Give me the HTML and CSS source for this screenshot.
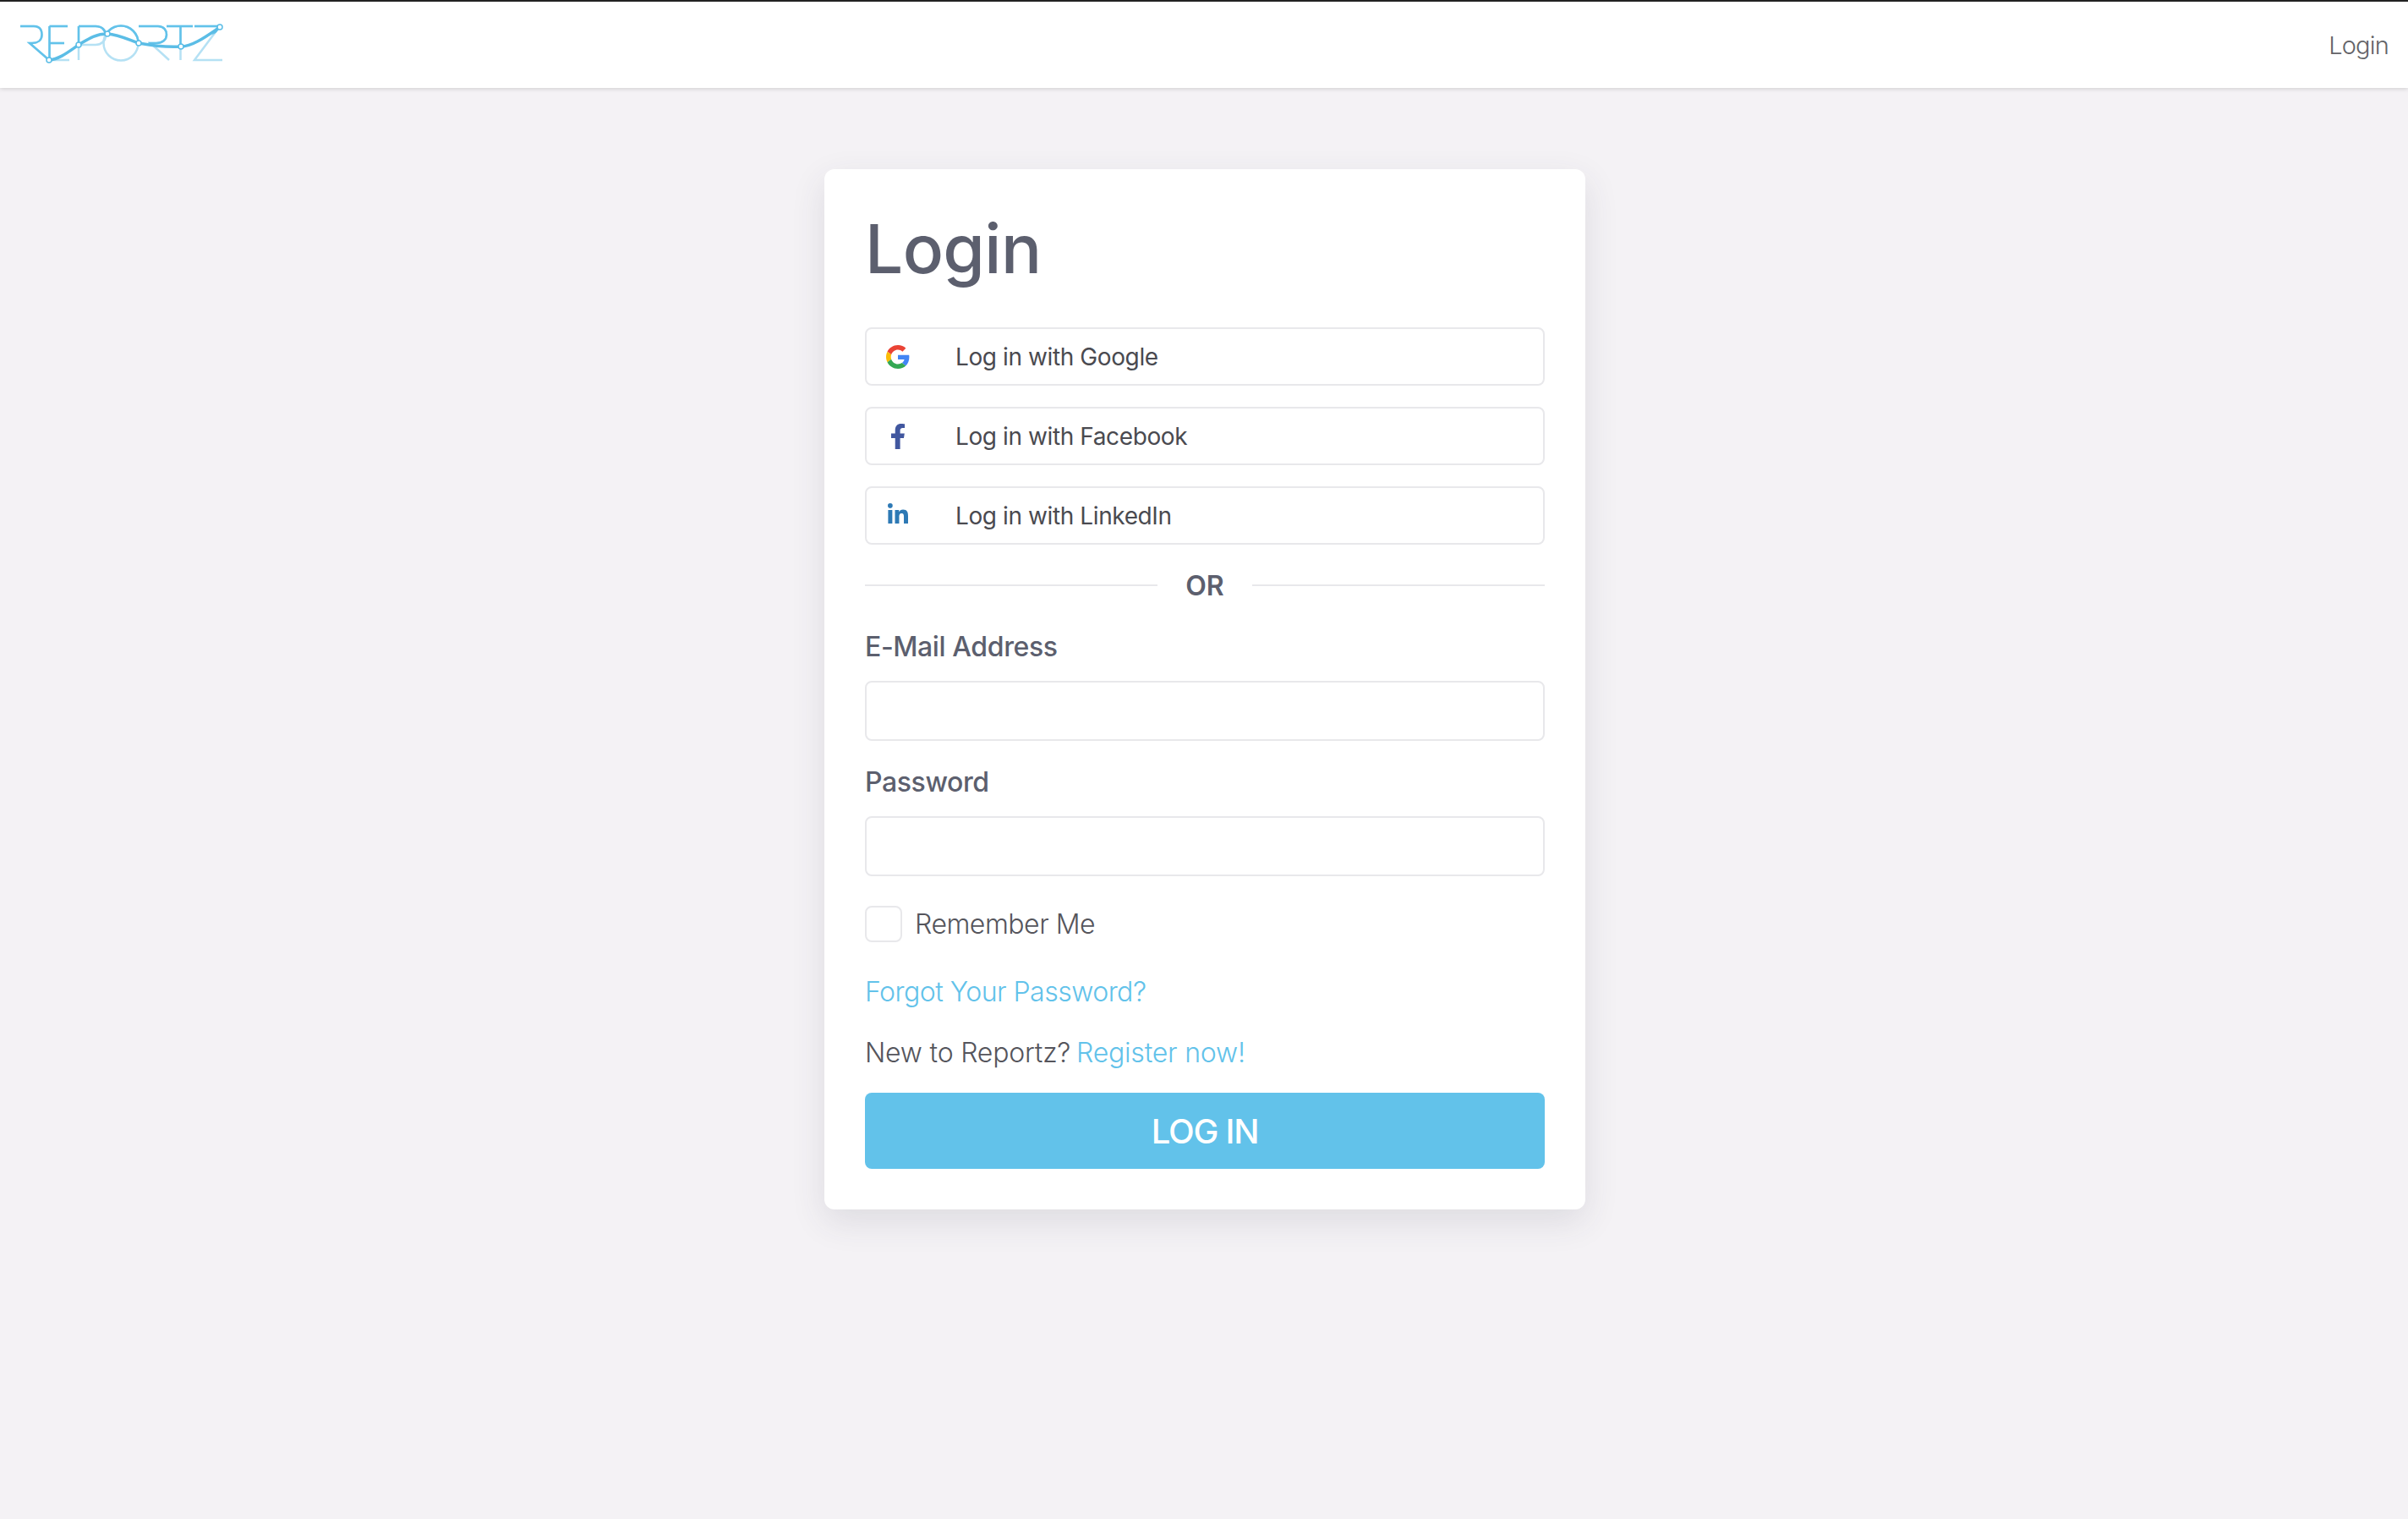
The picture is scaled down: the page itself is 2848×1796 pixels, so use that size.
FILE: index.html
```html
<!DOCTYPE html>
<html lang="en">
<head>
  <meta charset="UTF-8" />
  <title>Login - Reportz</title>
  <link rel="stylesheet" href="styles.css">
</head>
<body>
  <nav class="navbar">
    <a class="brand" href="#">
      <svg class="logo" width="270" height="80" viewBox="0 0 270 80" fill="none">
        <defs>
          <clipPath id="above-curve">
            <path d="M0 0H270V32C240 46 226 55 214 55C195 56 180 54 164 51C150 46 140 41 127 40C112 40 103 47 93 53C80 62 70 70 58 71L0 71Z" />
          </clipPath>
          <g id="letters">
            <path d="M24 31H40C50 31 49.500 40 49.500 41C49.500 48 44 51 38 51H35L58 71" />
            <path d="M58.500 31V71M58.500 31H80M58.500 51H76M58.500 71H82" />
            <path d="M93 31V71M93 31H113C121 31 125 36 125 42C125 48 120 53 113 53H93" />
            <circle cx="143" cy="51" r="20.500" />
            <path d="M164 31H187C194 31 197 36 197 41C197 47 192 51 185 51H178L200 71" />
            <path d="M197 31H228M213.500 31V71" />
            <path d="M230 31H260L230 71H263" />
          </g>
        </defs>
        <use href="#letters" stroke="#b5e1f4" stroke-width="2.500" />
        <use href="#letters" stroke="#62c2ea" stroke-width="2.500" clip-path="url(#above-curve)" />
        <path d="M58 71C70 70 80 62 93 53C103 47 112 40 127 40C140 41 150 46 164 51C180 54 195 56 214 55C226 55 240 46 260 32" stroke="#5bbde6" stroke-width="3.500" />
        <g fill="#fff" stroke="#5bbde6" stroke-width="1.500">
          <circle cx="58" cy="71" r="3" />
          <circle cx="93" cy="53" r="3" />
          <circle cx="127" cy="40" r="3" />
          <circle cx="164" cy="51" r="3" />
          <circle cx="214" cy="55" r="3" />
          <circle cx="260" cy="32" r="3" />
        </g>
      </svg>
    </a>
    <a class="nav-link" href="#">Login</a>
  </nav>

  <div class="page">
    <main class="card">
      <h1>Login</h1>

      <div class="social-list">
        <a class="social-btn" href="#">
          <svg class="social-icon" width="28" height="28" viewBox="0 0 48 48">
            <path fill="#ea4335" d="M24 9.500c3.540 0 6.710 1.220 9.210 3.600l6.850-6.850C35.900 2.380 30.470 0 24 0 14.620 0 6.510 5.380 2.560 13.220l7.980 6.190C12.430 13.720 17.740 9.500 24 9.500z" />
            <path fill="#4285f4" d="M46.980 24.550c0-1.570-.15-3.090-.38-4.550H24v9.020h12.940c-.58 2.960-2.260 5.480-4.780 7.180l7.730 6c4.510-4.180 7.090-10.360 7.090-17.650z" />
            <path fill="#fbbc05" d="M10.530 28.590c-.48-1.450-.76-2.990-.76-4.590s.27-3.140.76-4.590l-7.980-6.190C.92 16.460 0 20.120 0 24c0 3.880.92 7.540 2.560 10.780l7.970-6.190z" />
            <path fill="#34a853" d="M24 48c6.480 0 11.930-2.130 15.890-5.810l-7.730-6c-2.150 1.450-4.920 2.300-8.160 2.300-6.260 0-11.570-4.220-13.470-9.910l-7.980 6.190C6.510 42.620 14.620 48 24 48z" />
          </svg>
          <span>Log in with Google</span>
        </a>
        <a class="social-btn" href="#">
          <svg class="social-icon" width="28" height="30" viewBox="0 0 320 512">
            <path fill="#41579f" d="M279.140 288l14.220-92.660h-88.910v-60.130c0-25.350 12.420-50.060 52.240-50.060h40.420V6.260S260.430 0 225.360 0c-73.220 0-121.080 44.380-121.080 124.720v70.620H22.890V288h81.390v224h100.170V288z" />
          </svg>
          <span>Log in with Facebook</span>
        </a>
        <a class="social-btn" href="#">
          <svg class="social-icon social-icon-raised" width="28" height="24" viewBox="0 0 448 448">
            <path fill="#2d79b5" d="M100.280 448H7.400V148.900h92.880zM53.790 108.100C24.090 108.100 0 83.500 0 53.800a53.790 53.790 0 0 1 107.580 0c0 29.700-24.100 54.300-53.790 54.300zM447.900 448h-92.680V302.400c0-34.700-.7-79.200-48.290-79.200-48.290 0-55.690 37.700-55.690 76.700V448h-92.780V148.900h89.080v40.800h1.300c12.400-23.500 42.690-48.300 87.880-48.300 94 0 111.280 61.900 111.280 142.300V448z" />
          </svg>
          <span>Log in with LinkedIn</span>
        </a>
      </div>

      <div class="divider"><span>OR</span></div>

      <form>
        <label class="field-label" for="email">E-Mail Address</label>
        <input class="field-input" type="email" id="email" name="email" />

        <label class="field-label field-label-next" for="password">Password</label>
        <input class="field-input" type="password" id="password" name="password" />

        <label class="remember">
          <input type="checkbox" name="remember" />
          <span>Remember Me</span>
        </label>

        <p class="text-row forgot"><a href="#">Forgot Your Password?</a></p>
        <p class="text-row register">New to Reportz? <a href="#">Register now!</a></p>

        <button class="submit-btn" type="submit">LOG IN</button>
      </form>
    </main>
  </div>
</body>
</html>
```

FILE: styles.css
```css
* {
  box-sizing: border-box;
}
body {
  font-family: 'Inter', 'Open Sans', sans-serif;
  background-color: #f4f2f5;
  color: #55555c;
  margin: 0;
  min-height: 100vh;
}
a {
  color: #62c2ea;
  text-decoration: none;
}

/* Navbar */
.navbar {
  display: flex;
  justify-content: space-between;
  align-items: center;
  height: 104px;
  padding: 0 23px 0 0;
  background: #fff;
  border-top: 2px solid #222;
  box-shadow: 0 1px 5px rgba(0, 0, 0, 0.16);
}
.brand {
  display: flex;
  align-self: flex-start;
  margin-top: -2px;
}
.logo {
  display: block;
}
.nav-link {
  font-size: 29px;
  font-weight: 300;
  letter-spacing: -0.8px;
  color: #636368;
}

/* Card */
.page {
  padding: 96px 0 0 2px;
}
.card {
  width: 900px;
  height: 1230px;
  margin: 0 auto;
  padding: 48px;
  background: #fff;
  border-radius: 12px;
  box-shadow: 0 14px 40px rgba(60, 60, 80, 0.12);
}
h1 {
  margin: -2px 0 45px;
  font-size: 80px;
  line-height: 96px;
  font-weight: 500;
  letter-spacing: -0.6px;
  color: #5c5f6e;
}

/* Social logins */
.social-list {
  display: flex;
  flex-direction: column;
  gap: 25px;
}
.social-btn {
  display: flex;
  align-items: center;
  height: 69px;
  padding-left: 23px;
  border: 2px solid #e8e8eb;
  border-radius: 8px;
  font-size: 28px;
  letter-spacing: -0.4px;
  color: #4a4a50;
}
.social-icon {
  flex: none;
  margin-right: 54px;
}
.social-icon-raised {
  margin-bottom: 6px;
}

/* OR divider */
.divider {
  display: flex;
  align-items: center;
  gap: 33px;
  height: 44px;
  margin: 26px 0 31px;
  font-size: 32px;
  font-weight: 600;
  color: #5c5f6e;
}
.divider::before,
.divider::after {
  content: "";
  flex: 1;
  height: 2px;
  background: #e8e8eb;
}

/* Form */
.field-label {
  display: block;
  margin-bottom: 20px;
  font-size: 32px;
  line-height: 40px;
  font-weight: 500;
  letter-spacing: -0.4px;
  color: #5c5f6e;
}
.field-label-next {
  margin-top: 29px;
}
.field-input {
  display: block;
  width: 100%;
  height: 71px;
  border: 2px solid #e8e8eb;
  border-radius: 8px;
  background: #fff;
}
.remember {
  display: flex;
  align-items: center;
  gap: 15px;
  margin-top: 35px;
  font-size: 32px;
  font-weight: 300;
  letter-spacing: -0.5px;
  color: #55555c;
}
.remember input {
  appearance: none;
  width: 44px;
  height: 43px;
  margin: 0;
  border: 2px solid #e8e8eb;
  border-radius: 8px;
  background: #fff;
}
.text-row {
  margin: 0;
  font-size: 32px;
  line-height: 40px;
  font-weight: 300;
  letter-spacing: -0.5px;
  color: #55555c;
}
.forgot {
  margin-top: 39px;
}
.register {
  margin-top: 32px;
  letter-spacing: -0.2px;
}
.register a {
  margin-left: -2px;
}
.submit-btn {
  display: block;
  width: 100%;
  height: 90px;
  margin-top: 27px;
  border: none;
  border-radius: 8px;
  background-color: #62c2ea;
  color: #fff;
  font-family: inherit;
  font-size: 40px;
  font-weight: 500;
  letter-spacing: -1.2px;
}
```
